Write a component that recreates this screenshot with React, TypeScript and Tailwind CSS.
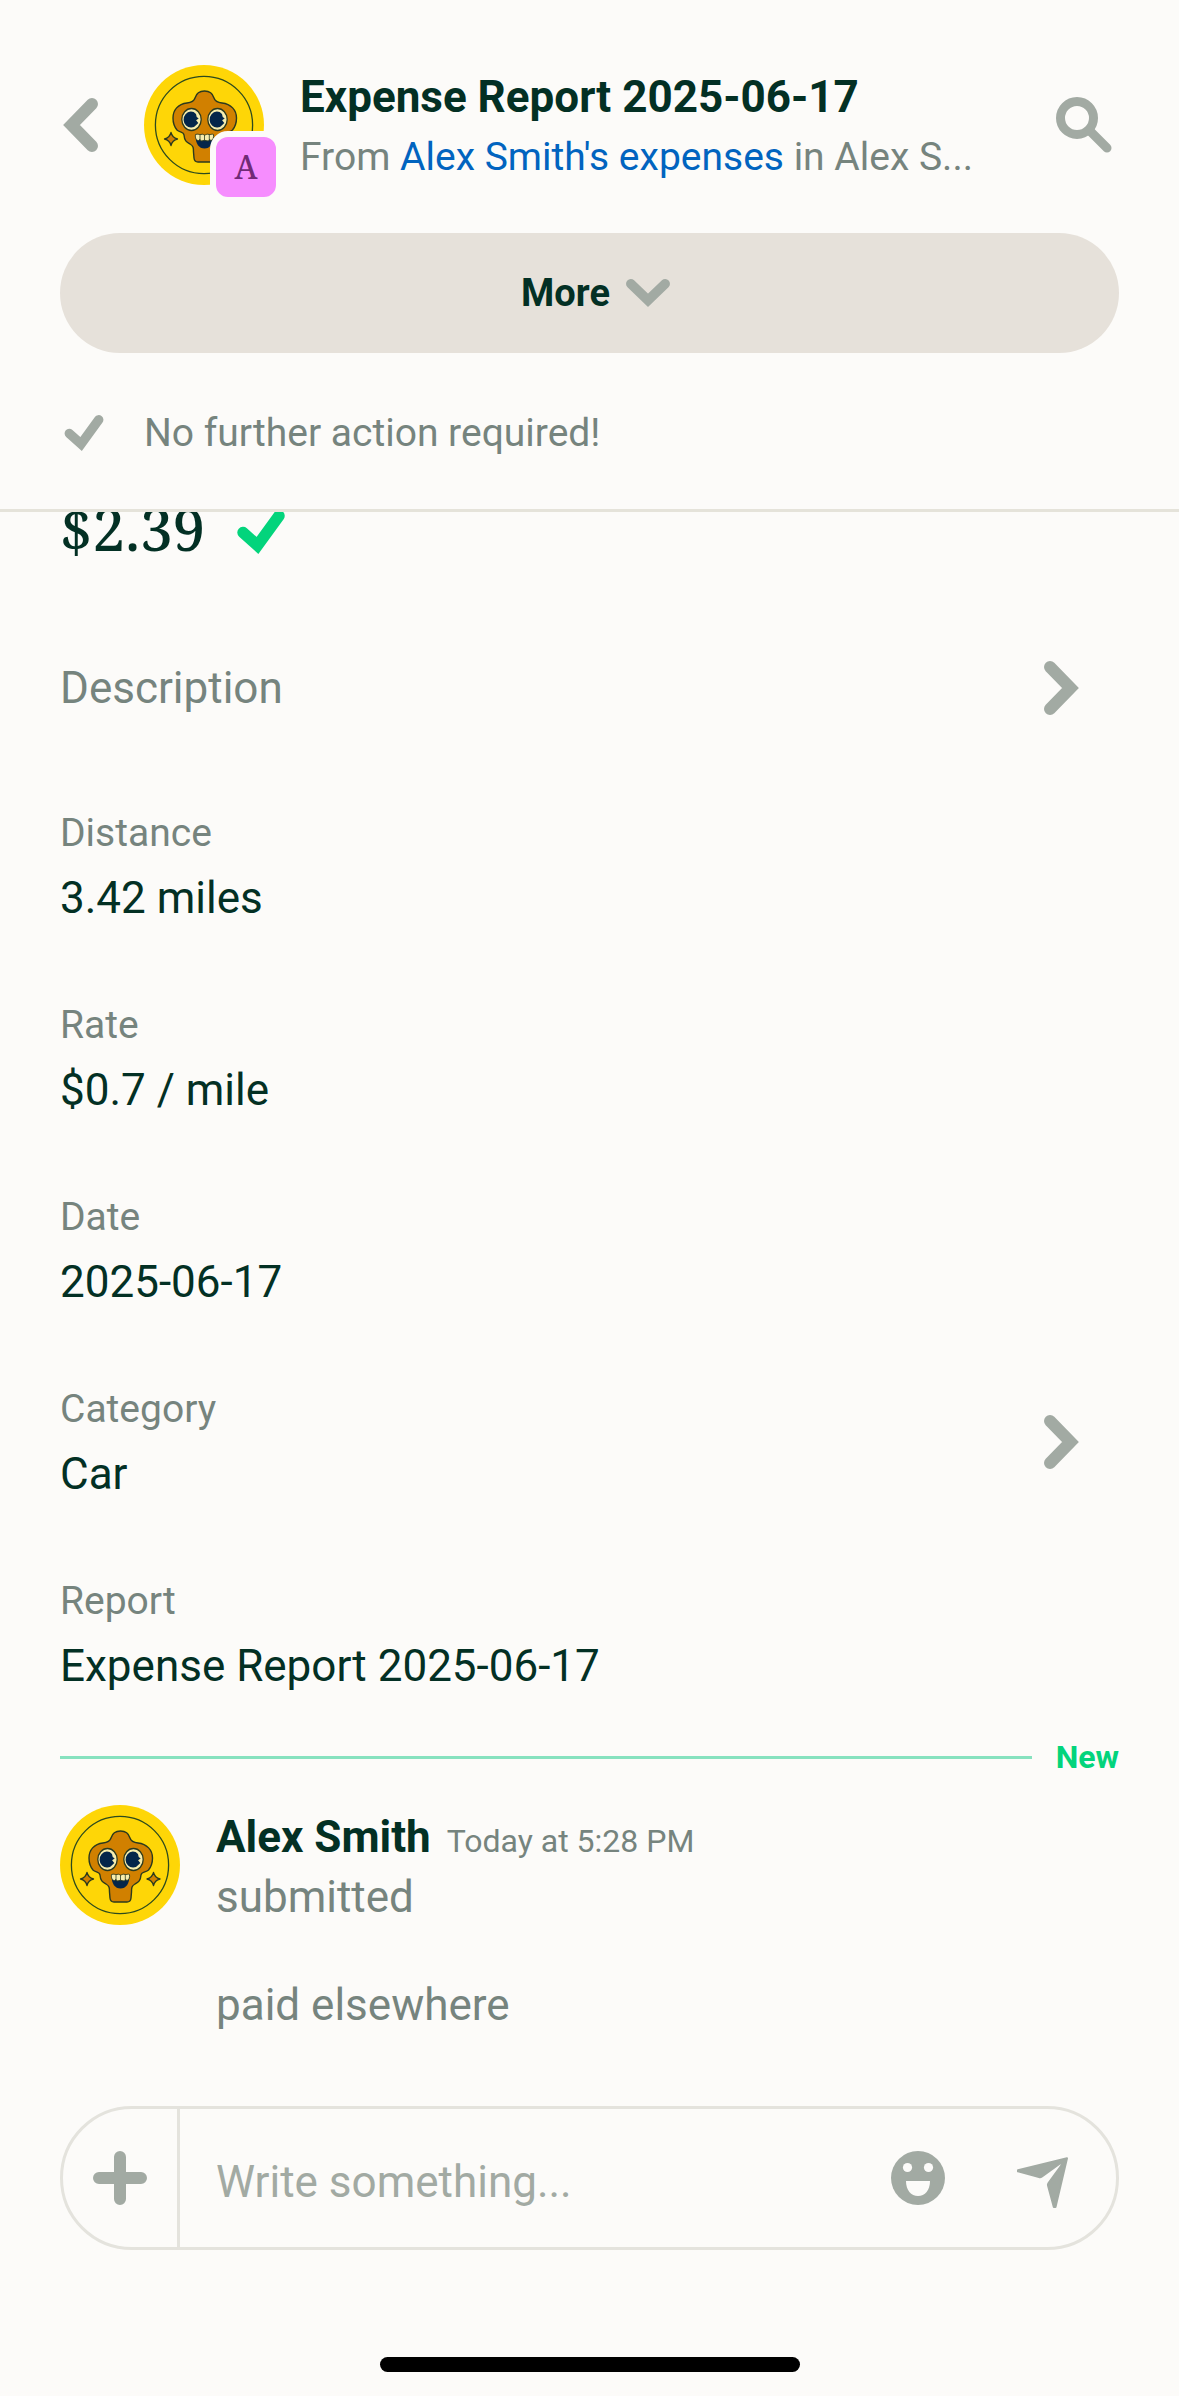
import React from "react";

const roboto = "font-['Roboto','Liberation_Sans',sans-serif]";
const serif = "font-['Noto_Serif','Liberation_Serif',serif]";

function Chevron({ className = "" }: { className?: string }) {
  return (
    <svg
      viewBox="0 0 35 54"
      className={`h-[54px] w-[35px] shrink-0 text-[#a2aaa3] ${className}`}
      fill="none"
      stroke="currentColor"
      strokeWidth="12"
      strokeLinecap="round"
      aria-hidden="true"
    >
      <path d="M6 6 26.5 27 6 48" />
    </svg>
  );
}

function Check({ className }: { className: string }) {
  return (
    <svg
      viewBox="0 0 39 36"
      className={className}
      fill="none"
      stroke="currentColor"
      strokeWidth="9.4"
      strokeLinecap="round"
      aria-hidden="true"
    >
      <path d="M4.8 18.4 16.6 29 34.2 4.8" />
    </svg>
  );
}

function Eye({ x }: { x: number }) {
  return (
    <g transform={`translate(${x} 54.5)`}>
      <ellipse rx="9.7" ry="11" fill="#f7edae" stroke="#2c3a1e" strokeWidth="1.3" />
      <path
        d="M4.5-5.6A7.3 8 0 1 0 5 5.2L6.8 3.4 4.6.8 7.2-1 5.2-2.6Z"
        fill="#04264a"
      />
    </g>
  );
}

function Sparkle({ x }: { x: number }) {
  return (
    <path
      transform={`translate(${x} 74)`}
      d="M0-6.5C1-2.5 2.5-1 6.5 0 2.5 1 1 2.5 0 6.5-1 2.5-2.5 1-6.5 0-2.5-1-1-2.5 0-6.5Z"
      fill="#d18000"
      stroke="#2c3a1e"
      strokeWidth="1.3"
      strokeLinejoin="round"
    />
  );
}

function Avatar() {
  return (
    <svg viewBox="0 0 120 120" className="size-[120px] shrink-0" role="img" aria-label="Alex Smith">
      <circle cx="60" cy="60" r="60" fill="#fed607" />
      <circle cx="60" cy="60" r="48.6" fill="none" stroke="#2c4a1e" strokeWidth="1.3" />
      <path
        d="M60.5 26C55 26 52 29.5 51 33 50 36.5 47 37.5 43 38 34 39 29 45 29 53 29 58 30.5 62 33 65 35.5 67.5 39.5 66.5 40 70 40.5 76 42.5 77 46 79 49.5 81 49.5 83 49.5 87L50 93C50.3 96 51.5 97 54 97H67C69.5 97 70.7 96 71 93L71.5 87C71.5 83 71.5 81 75 79 78.5 77 80.5 76 81 70 81.5 66.5 86 67.5 88.5 65 91 62 92.5 58 92.5 53 92.5 45 87 39 78 38 74 37.5 71 36.5 70 33 69 29.5 66 26 60.5 26Z"
        fill="#d18000"
        stroke="#2c3a1e"
        strokeWidth="1.4"
      />
      <Eye x={47.5} />
      <Eye x={73.5} />
      <path d="M51.5 70C51.5 79 55 83.5 60.5 83.5S69.5 79 69.5 70Z" fill="#04264a" />
      <path
        d="M51.5 69.5C54 68.5 55.5 70 57 69.5 59 68.5 59.5 70 60.5 70 62 70 63 68.5 65 69.5 66.5 70 68 68.5 69.5 69.5 70 72.5 69 75 67 75.5L65.5 74.5 64.5 76 61 75.5 60.5 74.8 60 75.5 57 76 56 74.5 54.5 75.5C52 75.5 51 72.5 51.5 69.5Z"
        fill="#f7edae"
        stroke="#2c3a1e"
        strokeWidth="0.9"
      />
      <path d="M56 70V75M60.5 70V75.5M65.3 70V75" stroke="#2c3a1e" strokeWidth="0.8" />
      <Sparkle x={27} />
      <Sparkle x={93.5} />
    </svg>
  );
}

function Header() {
  return (
    <header className="border-b-3 border-[#e5e3da] px-[60px] pt-[65px]">
      <div className="flex h-[120px] items-center">
        <button type="button" aria-label="Back" className="flex h-[120px] w-[84px] shrink-0 items-center pl-[3px]">
          <Chevron className="rotate-180" />
        </button>
        <div className="relative shrink-0">
          <Avatar />
          <span
            className={`absolute -right-[18px] -bottom-[18px] flex size-[72px] items-center justify-center rounded-[18px] border-6 border-[#fcfbf9] bg-[#f68dfe] text-[32px] leading-none font-medium text-[#712a76] ${serif}`}
          >
            A
          </span>
        </div>
        <div className="ml-9 min-w-0 flex-1 pt-1">
          <h1 className="truncate text-[44px] leading-[60px] font-bold">Expense Report 2025-06-17</h1>
          <p className="truncate text-[39px] leading-[60px] text-[#76847e]">
            From{" "}
            <a href="#expenses" className="text-[#0164bf]">
              Alex Smith's expenses
            </a>{" "}
            in Alex S...
          </p>
        </div>
        <button type="button" aria-label="Search" className="flex h-[120px] w-[84px] shrink-0 items-center justify-end pr-[7px]">
          <svg viewBox="0 0 56 56" className="size-14 text-[#a2aaa3]" fill="none" stroke="currentColor" aria-hidden="true">
            <circle cx="21" cy="21" r="16.5" strokeWidth="9" />
            <path d="M34 34 51 51" strokeWidth="9" strokeLinecap="round" />
          </svg>
        </button>
      </div>
      <button
        type="button"
        className="mt-12 flex h-[120px] w-full items-center justify-center gap-4 rounded-full bg-[#e6e1da] pl-3 text-[38px] font-bold"
      >
        More
        <svg
          viewBox="0 0 44 28"
          className="h-7 w-11 text-[#a2aaa3]"
          fill="none"
          stroke="currentColor"
          strokeWidth="9.5"
          strokeLinecap="round"
          aria-hidden="true"
        >
          <path d="M4.8 4.8 22 21.3 39.2 4.8" />
        </svg>
      </button>
      <div className="flex items-center pt-[50px] pb-[46px] text-[39px] leading-[60px] text-[#76847e]">
        <Check className="mr-10 ml-1 h-9 w-10 text-[#a2aaa3]" />
        No further action required!
      </div>
    </header>
  );
}

function Field({ label, value, link = false }: { label: string; value: string; link?: boolean }) {
  const body = (
    <>
      <span className="block">
        <span className="block text-[39px] leading-[60px] text-[#76847e]">{label}</span>
        <span className="mt-[5px] block text-[44px] leading-[60px]">{value}</span>
      </span>
      {link && <Chevron />}
    </>
  );
  const row = "flex w-full items-center justify-between pt-8 pr-10 pb-[35px] text-left";
  return link ? (
    <button type="button" className={row}>
      {body}
    </button>
  ) : (
    <div className={row}>{body}</div>
  );
}

function Composer() {
  return (
    <form
      onSubmit={(e) => e.preventDefault()}
      className="mx-[60px] flex h-36 items-stretch overflow-hidden rounded-full border-3 border-[#e4e3dd] text-[#a2aaa3]"
    >
      <button type="button" aria-label="Add" className="flex w-[117px] shrink-0 items-center justify-center border-r-3 border-[#e4e3dd]">
        <svg viewBox="0 0 54 54" className="size-[54px]" fill="none" stroke="currentColor" strokeWidth="12" strokeLinecap="round" aria-hidden="true">
          <path d="M27 6V48M6 27H48" />
        </svg>
      </button>
      <input
        type="text"
        aria-label="Message"
        placeholder="Write something..."
        className="min-w-0 flex-1 bg-transparent pt-2 pl-9 text-[44px] text-[#033024] outline-none placeholder:text-[#a2aaa3]"
      />
      <button type="button" aria-label="Emoji" className="flex w-[120px] shrink-0 items-center justify-center">
        <svg viewBox="0 0 54 54" className="size-[54px]" aria-hidden="true">
          <circle cx="27" cy="27" r="27" fill="currentColor" />
          <circle cx="16.5" cy="16.5" r="4.6" fill="#fcfbf9" />
          <circle cx="37.5" cy="16.5" r="4.6" fill="#fcfbf9" />
          <path d="M15 30H39C39 39 34 45 27 45S15 39 15 30Z" fill="#fcfbf9" />
        </svg>
      </button>
      <button type="submit" aria-label="Send" className="mr-3.5 ml-1 flex w-[120px] shrink-0 items-center justify-center">
        <svg viewBox="0 0 60 60" className="size-[60px]" fill="currentColor" stroke="currentColor" strokeWidth="2" strokeLinejoin="round" aria-hidden="true">
          <path d="M6 22.2 55 10.2 43.5 59 41.8 59 36 37.5Q35.6 36.2 36.5 35L50 16.5Q50 14.5 48 15.5L30 28.5Q28.5 29.5 27 29L6 23.4Z" />
        </svg>
      </button>
    </form>
  );
}

export default function App() {
  return (
    <div className={`flex min-h-screen flex-col bg-[#fcfbf9] text-[#033024] ${roboto}`}>
      <Header />
      <main className="flex-1 overflow-hidden px-[60px]">
        <div className="-mt-[13px] flex items-center gap-8 pb-11">
          <span className={`text-[58px] leading-[60px] font-medium ${serif}`}>$2.39</span>
          <Check className="mt-1.5 h-11 w-12 text-[#03d47c]" />
        </div>
        <button type="button" className="flex w-full items-center justify-between pt-[55px] pr-10 pb-[53px] text-left text-[44px] leading-[60px] text-[#76847e]">
          Description
          <Chevron />
        </button>
        <Field label="Distance" value="3.42 miles" />
        <Field label="Rate" value="$0.7 / mile" />
        <Field label="Date" value="2025-06-17" />
        <Field label="Category" value="Car" link />
        <Field label="Report" value="Expense Report 2025-06-17" />

        <div className="mt-0.5 flex items-center gap-6 text-[32px] leading-[48px] font-bold text-[#03d47c]">
          <div className="h-[3px] flex-1 bg-[#87e2bf]" />
          New
        </div>

        <article className="mt-6 flex pb-10">
          <Avatar />
          <div className="ml-9 pt-0.5 text-[44px] leading-[60px] text-[#76847e]">
            <div className="flex items-baseline gap-4">
              <h2 className="font-bold text-[#033024]">Alex Smith</h2>
              <time className="text-[32px] leading-none">Today at 5:28 PM</time>
            </div>
            <p>submitted</p>
            <p className="mt-12">paid elsewhere</p>
          </div>
        </article>
      </main>
      <footer>
        <Composer />
        <div className="mx-auto mt-[107px] mb-6 h-[15px] w-[420px] rounded-full bg-black" />
      </footer>
    </div>
  );
}
